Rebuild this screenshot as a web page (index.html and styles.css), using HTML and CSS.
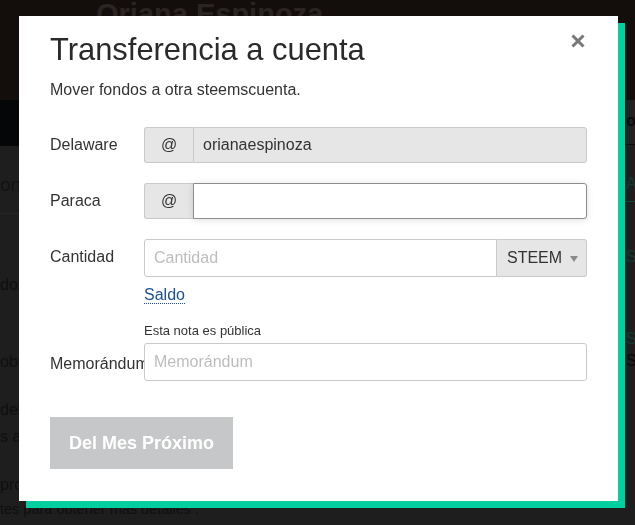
FILE: index.html
```html
<!DOCTYPE html>
<html lang="es">
<head>
<meta charset="utf-8">
<title>Transferencia a cuenta</title>
<link rel="stylesheet" href="styles.css">
</head>
<body>
<div class="page">
  <header class="hero"><h1 class="hero-name">Oriana Espinoza</h1></header>
  <div class="below">
    <div class="left-col">
      <div class="nav-dark"></div>
      <main class="main">
        <p class="frag frag-big">ontenido de la cuenta</p>
        <div class="rule"></div>
        <p class="frag f2">dos disponibles</p>
        <p class="frag f3">obre el saldo</p>
        <p class="frag f4">del Steem Power</p>
        <p class="frag f5">s a la cuenta</p>
        <p class="frag f6">proximo pago</p>
        <p class="frag f7">tes para obtener más detalles .</p>
      </main>
    </div>
    <div class="right-col">
      <div class="nav-gray"><span class="rc-o">o</span></div>
      <div class="rc-a">A</div>
      <div class="rc-s1">S</div>
      <div class="rc-s2">S</div>
      <div class="rc-s3">S</div>
    </div>
  </div>
</div>

<div class="modal">
  <svg class="close" width="14" height="14" viewBox="0 0 14 14" aria-label="Cerrar">
    <path d="M1.5 1.5 L12.5 12.5 M12.5 1.5 L1.5 12.5" stroke="#787878" stroke-width="3" stroke-linecap="butt" fill="none"/>
  </svg>
  <h2 class="title">Transferencia a cuenta</h2>
  <p class="subtitle">Mover fondos a otra steemscuenta.</p>

  <div class="row row-first">
    <label class="label">Delaware</label>
    <div class="group">
      <span class="addon">@</span>
      <input class="field field-disabled" value="orianaespinoza" disabled>
    </div>
  </div>

  <div class="row">
    <label class="label">Paraca</label>
    <div class="group">
      <span class="addon">@</span>
      <input class="field field-focus" value="">
    </div>
  </div>

  <div class="row">
    <label class="label">Cantidad</label>
    <div class="col">
      <div class="group group-tall">
        <input class="field field-amount" placeholder="Cantidad">
        <span class="select">STEEM<span class="caret"></span></span>
      </div>
      <div class="saldo"><a class="saldo-link">Saldo</a></div>
    </div>
  </div>

  <div class="row row-memo">
    <label class="label label-memo">Memorándum</label>
    <div class="col">
      <div class="note">Esta nota es pública</div>
      <input class="field field-memo" placeholder="Memorándum">
    </div>
  </div>

  <button class="submit">Del Mes Próximo</button>
</div>
</body>
</html>
```

FILE: styles.css
```css
html, body {
  margin: 0;
  padding: 0;
}
body {
  background: #1e1e1e;
  font-family: "Liberation Sans", Arial, sans-serif;
  width: 635px;
  height: 525px;
  overflow: hidden;
}
.page {
  width: 635px;
}
.hero {
  height: 100px;
  background: #130e0b;
}
.hero-name {
  margin: 0;
  padding-left: 96px;
  font-size: 29px;
  line-height: 28px;
  font-weight: bold;
  color: #2a2523;
}
.below {
  display: grid;
  grid-template-columns: 1fr 9px;
}
.left-col {
  min-width: 0;
}
.nav-dark {
  height: 46px;
  background: #050608;
}
.main {
  padding-top: 27px;
}
.frag {
  margin: 0;
  font-size: 16px;
  line-height: 24px;
  color: #0f0f0f;
  white-space: nowrap;
}
.frag-big {
  font-size: 19px;
  color: #121212;
}
.rule {
  margin-top: 16px;
  border-top: 1px solid #262626;
}
.f2 { margin-top: 59px; }
.f3 { margin-top: 53px; }
.f4 { margin-top: 24px; }
.f5 { margin-top: 3px; }
.f6 { margin-top: 24px; }
.f7 { margin-top: 0; font-size: 14.5px; }

.right-col {
  background: #1e1e1e;
  font-size: 16px;
  color: #0c0c0c;
  overflow: hidden;
}
.nav-gray {
  height: 45px;
  border-bottom: 1px solid #0d0d0d;
  background: #222222;
  padding-top: 12px;
  box-sizing: border-box;
  line-height: 18px;
  font-weight: bold;
}
.rc-a {
  margin-top: 30px;
  color: #123a30;
  line-height: 18px;
  padding-bottom: 8px;
  border-bottom: 1px solid #134536;
}
.rc-s1 { margin-top: 46px; color: #123a30; line-height: 18px; }
.rc-s2 { margin-top: 64px; color: #123a30; line-height: 18px; }
.rc-s3 { margin-top: 4px; color: #0a0a0a; line-height: 18px; }

/* Modal */
.modal {
  position: fixed;
  left: 19px;
  top: 16px;
  width: 599px;
  box-sizing: border-box;
  padding: 16px 31px 32px 31px;
  background: #ffffff;
  box-shadow: 7px 7px 0 #03cf9f;
  color: #333333;
}
.close {
  position: absolute;
  top: 18px;
  right: 33px;
}
.title {
  margin: 0;
  font-size: 30.9px;
  line-height: 36px;
  font-weight: normal;
  color: #2a2a2a;
}
.subtitle {
  margin: 12px 0 0 0;
  font-size: 16px;
  line-height: 20px;
  color: #333;
}
.row {
  display: grid;
  grid-template-columns: 94px 443px;
  margin-top: 20px;
}
.row-first {
  margin-top: 27px;
}
.row-memo {
  margin-top: 18px;
}
.label {
  font-size: 16px;
  line-height: 36px;
  white-space: nowrap;
  color: #333;
}
.label-memo {
  line-height: 20px;
  margin-top: 31px;
  overflow: hidden;
}
.col {
  display: flex;
  flex-direction: column;
}
.group {
  display: flex;
  height: 36px;
}
.group-tall {
  height: 38px;
}
.addon {
  width: 49px;
  flex: none;
  box-sizing: border-box;
  background: #e6e6e6;
  border: 1px solid #cacaca;
  border-right: none;
  border-radius: 3px 0 0 3px;
  display: flex;
  align-items: center;
  justify-content: center;
  font-size: 16px;
  color: #333;
}
.field {
  flex: 1;
  min-width: 0;
  margin: 0;
  box-sizing: border-box;
  border: 1px solid #cacaca;
  border-radius: 0 3px 3px 0;
  padding: 0 9px;
  font-family: "Liberation Sans", Arial, sans-serif;
  font-size: 16px;
  color: #333;
  background: #fff;
  outline: none;
}
.field::placeholder {
  color: #bdbdbd;
  opacity: 1;
}
.field-disabled {
  background: #e6e6e6;
  color: #333;
  -webkit-text-fill-color: #333;
  opacity: 1;
}
.field-focus {
  border-color: #8c8c8c;
  box-shadow: 0 1px 7px rgba(0, 0, 0, 0.13);
}
.field-amount {
  border-radius: 3px 0 0 3px;
}
.select {
  width: 90px;
  flex: none;
  box-sizing: border-box;
  background: #e6e6e6;
  border: 1px solid #cacaca;
  border-left: none;
  border-radius: 0 3px 3px 0;
  display: flex;
  align-items: center;
  padding-left: 10px;
  font-size: 16px;
  color: #333;
}
.caret {
  width: 0;
  height: 0;
  margin-left: 8px;
  margin-top: 1px;
  border-left: 4px solid transparent;
  border-right: 4px solid transparent;
  border-top: 6px solid #8a8a8a;
}
.saldo {
  margin-top: 8px;
  font-size: 16px;
  line-height: 20px;
}
.saldo-link {
  color: #1a5099;
  border-bottom: 1px dotted #1a5099;
  cursor: pointer;
}
.note {
  font-size: 13px;
  line-height: 16px;
  color: #333;
  margin-bottom: 4px;
}
.field-memo {
  flex: none;
  height: 38px;
  width: 443px;
  border-radius: 3px;
}
.submit {
  display: block;
  margin-top: 36px;
  width: 183px;
  height: 52px;
  border: none;
  border-radius: 0;
  background: #c6c7c9;
  color: #ffffff;
  font-family: "Liberation Sans", Arial, sans-serif;
  font-size: 18px;
  font-weight: bold;
  padding: 0;
  cursor: default;
}
```
